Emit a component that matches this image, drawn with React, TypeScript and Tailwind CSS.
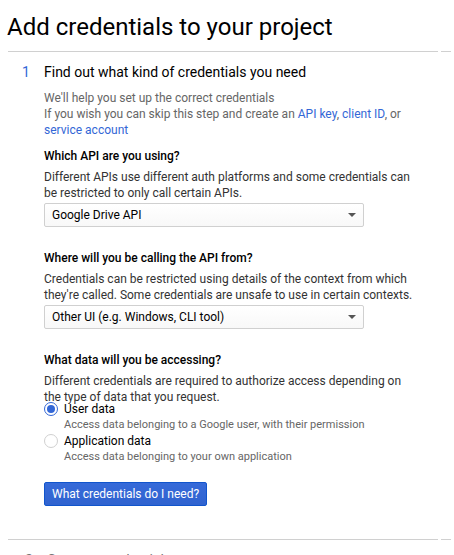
import { useState, type ReactNode } from "react";

function Rule() {
  return (
    <div className="flex gap-[3px] pl-2 pr-[3px]" aria-hidden="true">
      <div className="h-px flex-1 bg-[#d0d0d0]" />
      <div className="h-px w-[10px] bg-[#d0d0d0]" />
    </div>
  );
}

function Dropdown({ id, options }: { id: string; options: string[] }) {
  return (
    <div className="relative mt-0.5 max-w-80">
      <select
        id={id}
        className="block h-6 w-full appearance-none rounded-xs border border-[#d0d0d0] bg-linear-to-b from-white to-[#f8f8f8] px-[7px] pr-6 text-xs text-black"
      >
        {options.map((option) => (
          <option key={option}>{option}</option>
        ))}
      </select>
      <svg
        className="pointer-events-none absolute right-2 top-[10px] h-1 w-2"
        viewBox="0 0 8 4"
        fill="#555"
        aria-hidden="true"
      >
        <path d="M0 0h8L4 4z" />
      </svg>
    </div>
  );
}

function Question({ title, htmlFor, children }: { title: string; htmlFor: string; children: ReactNode }) {
  return (
    <>
      <label htmlFor={htmlFor} className="mb-[5px] block font-medium text-black">
        {title}
      </label>
      <p className="text-[#333]">{children}</p>
    </>
  );
}

type RadioProps = { id: string; label: string; hint: string; checked: boolean; onSelect: () => void };

function RadioOption({ id, label, hint, checked, onSelect }: RadioProps) {
  return (
    <div className="flex gap-1.5">
      <input
        type="radio"
        name="data"
        id={id}
        checked={checked}
        onChange={onSelect}
        className="mt-px size-[14px] shrink-0 appearance-none rounded-full border border-[#d0d0d0] bg-white checked:border-[#3367d6] checked:bg-[#3367d6] checked:bg-clip-content checked:p-0.5"
      />
      <div>
        <label htmlFor={id} className="block text-black">
          {label}
        </label>
        <p className="text-[11px]/4 text-[#666]">{hint}</p>
      </div>
    </div>
  );
}

export default function App() {
  const [data, setData] = useState("user");
  return (
    <main className="h-screen overflow-hidden bg-white font-['Roboto',sans-serif] text-xs text-black">
      <h1 className="px-[7px] pb-2 pt-[11px] text-2xl">Add credentials to your project</h1>
      <Rule />
      <section className="flex pl-[22px] pr-10 pt-[10px]">
        <div className="w-[22px] shrink-0 text-sm text-[#3367d6]">1</div>
        <div className="flex-1">
          <h2 className="text-sm">Find out what kind of credentials you need</h2>
          <p className="mt-2 text-[#666]">
            We'll help you set up the correct credentials
            <br />
            If you wish you can skip this step and create an{" "}
            <a href="#api-key" className="text-[#3367d6]">API key</a>,{" "}
            <a href="#client-id" className="text-[#3367d6]">client ID</a>, or{" "}
            <a href="#service-account" className="text-[#3367d6]">service account</a>
          </p>
          <form className="mt-[10px]" onSubmit={(event) => event.preventDefault()}>
            <Question title="Which API are you using?" htmlFor="api">
              Different APIs use different auth platforms and some credentials can be restricted to only call certain
              APIs.
            </Question>
            <Dropdown id="api" options={["Google Drive API", "Gmail API", "Google Calendar API"]} />
            <div className="mt-[23px]">
              <Question title="Where will you be calling the API from?" htmlFor="platform">
                Credentials can be restricted using details of the context from which they're called. Some credentials
                are unsafe to use in certain contexts.
              </Question>
              <Dropdown id="platform" options={["Other UI (e.g. Windows, CLI tool)", "Web browser (Javascript)"]} />
            </div>
            <div className="mt-[23px]">
              <Question title="What data will you be accessing?" htmlFor="user-data">
                Different credentials are required to authorize access depending on the type of data that you request.
              </Question>
            </div>
            <div className="-mt-1">
              <RadioOption
                id="user-data"
                label="User data"
                hint="Access data belonging to a Google user, with their permission"
                checked={data === "user"}
                onSelect={() => setData("user")}
              />
              <RadioOption
                id="application-data"
                label="Application data"
                hint="Access data belonging to your own application"
                checked={data === "application"}
                onSelect={() => setData("application")}
              />
            </div>
            <button
              type="submit"
              className="mt-[17px] block h-6 rounded-xs border border-[#1155cc] bg-linear-to-b from-[#366ad9] to-[#3063cf] px-[7px] text-white"
            >
              What credentials do I need?
            </button>
          </form>
        </div>
      </section>
      <div className="mt-[33px]">
        <Rule />
      </div>
      <section className="flex pl-[25px] pt-[10px] text-sm text-[#757575]">
        <div className="w-[22px] shrink-0">2</div>
        <h2>Get your credentials</h2>
      </section>
    </main>
  );
}
